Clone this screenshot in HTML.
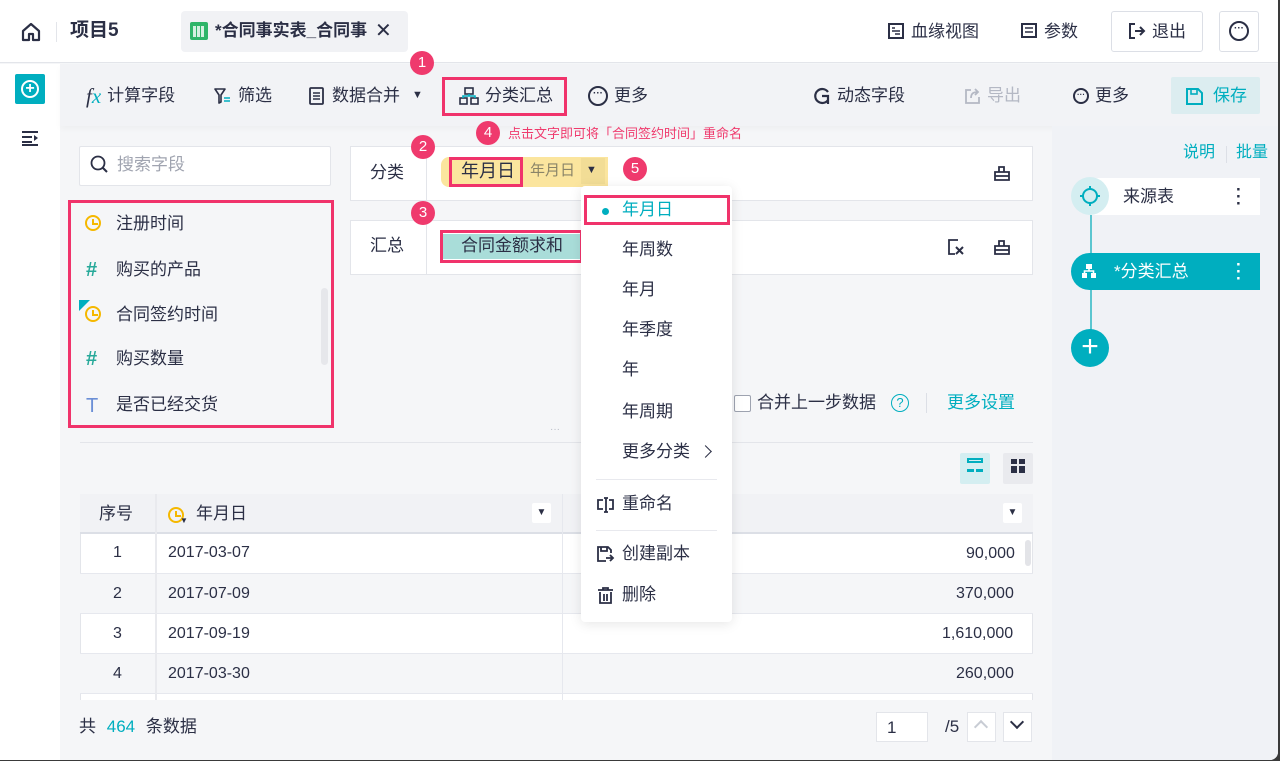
<!DOCTYPE html>
<html><head><meta charset="utf-8"><style>
*{box-sizing:border-box;margin:0;padding:0}
body{width:1280px;height:761px;overflow:hidden;background:#3a3a3a;font-family:"Liberation Sans","Noto Sans CJK SC",sans-serif;color:#2b2f45;font-size:16px;position:relative;line-height:1.25}
.a{position:absolute}
.win{position:absolute;left:0;top:0;width:1278px;height:760px;background:#f5f6f8;border-radius:0 0 8px 0;overflow:hidden}
.pink{border:3px solid #f0336b}
.badge{position:absolute;width:24px;height:24px;border-radius:12px;background:#ef3a6d;color:#fff;font-size:15px;text-align:center;line-height:24px}
.tb{position:absolute;top:84px;font-size:17px;display:flex;align-items:center;gap:6px;height:24px}
.fld{position:absolute;left:116px;font-size:17px}
.mi{position:absolute;left:622px;font-size:17px}
.clk{position:absolute;width:16px;height:16px;border:2px solid #f5b800;border-radius:50%}
.clk:after{content:"";position:absolute;left:5px;top:2px;width:4px;height:4px;border-left:2px solid #f5b800;border-bottom:2px solid #f5b800}
</style></head><body>
<div class="win">
<!-- top bar -->
<div class="a" style="left:0;top:0;width:1278px;height:63px;background:#fff;border-bottom:1px solid #e3e5ea"></div>
<svg class="a" style="left:20px;top:21px" width="22" height="22" viewBox="0 0 22 22"><path d="M3 10 L11 3 L19 10 V19 H13 V13 H9 V19 H3 Z" fill="none" stroke="#2b2f45" stroke-width="2.2" stroke-linejoin="round"/></svg>
<div class="a" style="left:56px;top:22px;width:1px;height:20px;background:#e3e5ea"></div>
<div class="a" style="left:70px;top:19px;font-size:19px;font-weight:bold">项目5</div>
<div class="a" style="left:181px;top:11px;width:227px;height:41px;background:#f1f2f5;border-radius:4px"></div>
<div class="a" style="left:190px;top:22px;width:18px;height:18px;background:#2fb569;border-radius:2px"><div style="margin:4px 3px;height:11px;background:repeating-linear-gradient(90deg,#fff 0 3px,transparent 3px 4px);opacity:.8"></div></div>
<div class="a" style="left:215px;top:20px;font-size:17px;font-weight:bold;width:152px;white-space:nowrap;overflow:hidden">*合同事实表_合同事</div>
<div class="a" style="left:375px;top:19px;font-size:20px">✕</div>
<svg class="a" style="left:888px;top:23px" width="16" height="16"><rect x="1" y="1" width="14" height="14" fill="none" stroke="#2b2f45" stroke-width="2"/><path d="M4 5h3M4 8h8M7 11h5" stroke="#2b2f45" stroke-width="1.6"/></svg>
<div class="a" style="left:911px;top:21px;font-size:17px">血缘视图</div>
<svg class="a" style="left:1021px;top:23px" width="16" height="16"><rect x="1" y="1" width="14" height="13" fill="none" stroke="#2b2f45" stroke-width="2"/><path d="M4 5h8M4 9h8" stroke="#2b2f45" stroke-width="1.6"/></svg>
<div class="a" style="left:1044px;top:21px;font-size:17px">参数</div>
<div class="a" style="left:1111px;top:11px;width:92px;height:41px;border:1px solid #dcdfe6;border-radius:3px;background:#fff"></div>
<svg class="a" style="left:1128px;top:22px" width="18" height="18"><path d="M7 2H2V16H7M7 9H16M12 5L16 9L12 13" fill="none" stroke="#2b2f45" stroke-width="2"/></svg>
<div class="a" style="left:1152px;top:21px;font-size:17px">退出</div>
<div class="a" style="left:1219px;top:11px;width:40px;height:41px;border:1px solid #dcdfe6;border-radius:3px;background:#fff"></div>
<div class="a" style="left:1229px;top:21px;width:20px;height:20px;border:2px solid #2b2f45;border-radius:50%;font-size:10px;text-align:center;line-height:12px;font-weight:bold">···</div>

<!-- left rail -->
<div class="a" style="left:0;top:64px;width:60px;height:700px;background:#fff"></div>
<div class="a" style="left:15px;top:74px;width:30px;height:30px;background:#00aebf;border-radius:2px"><div style="margin:6px;width:18px;height:18px;border:2px solid #fff;border-radius:50%;color:#fff;font-size:16px;line-height:13px;text-align:center;font-weight:bold">+</div></div>
<svg class="a" style="left:22px;top:130px" width="18" height="16"><path d="M0 2H16M0 7H10M0 12H10M0 15H16" stroke="#2b2f45" stroke-width="2"/><path d="M12 5L16 8L12 11Z" fill="#2b2f45"/></svg>

<!-- toolbar -->
<div class="a" style="left:60px;top:64px;width:1218px;height:62px;background:#f2f3f6;box-shadow:0 3px 6px rgba(0,0,0,.03)"></div>
<div class="tb" style="left:86px"><span style="font-style:italic;font-family:'Liberation Serif',serif;font-size:21px">f<span style="color:#00aebf">x</span></span><span>计算字段</span></div>
<div class="tb" style="left:214px"><svg width="18" height="18"><path d="M1 2H11L7 8V15L5 16V8Z" fill="none" stroke="#2b2f45" stroke-width="1.6" stroke-linejoin="round"/><path d="M10 11H16M10 14H16" stroke="#00aebf" stroke-width="1.6"/></svg><span>筛选</span></div>
<div class="tb" style="left:308px"><svg width="18" height="20"><rect x="2" y="2" width="13" height="16" rx="1" fill="none" stroke="#2b2f45" stroke-width="1.8"/><path d="M5 7h7M5 10h7M5 13h7" stroke="#2b2f45" stroke-width="1.4"/></svg><span>数据合并</span><span style="font-size:11px;margin-left:6px">▼</span></div>
<div class="a pink" style="left:442px;top:77px;width:125px;height:39px"></div>
<div class="tb" style="left:459px"><svg width="20" height="18"><rect x="6" y="1" width="8" height="6" fill="none" stroke="#2b2f45" stroke-width="1.6"/><rect x="1" y="11" width="7" height="6" fill="none" stroke="#2b2f45" stroke-width="1.6"/><rect x="12" y="11" width="7" height="6" fill="none" stroke="#2b2f45" stroke-width="1.6"/><path d="M10 7v2M4 11V9h12v2" stroke="#00aebf" stroke-width="1.6" fill="none"/></svg><span>分类汇总</span></div>
<div class="badge" style="left:410px;top:51px">1</div>
<div class="tb" style="left:588px"><span style="display:inline-block;width:20px;height:20px;border:2px solid #2b2f45;border-radius:50%;font-size:10px;text-align:center;line-height:12px;font-weight:bold">···</span><span>更多</span></div>
<div class="tb" style="left:813px"><svg width="18" height="18"><path d="M15 5A7 7 0 1 0 15 13M9 9H15V17" fill="none" stroke="#2b2f45" stroke-width="2.2"/></svg><span>动态字段</span></div>
<div class="tb" style="left:965px;color:#b4b8c4"><svg width="16" height="18"><path d="M6 3H1V16H14V10" fill="none" stroke="#b4b8c4" stroke-width="1.8"/><path d="M6 11C6 6 9 5 13 5M10 2L13 5L10 8" fill="none" stroke="#b4b8c4" stroke-width="1.8"/></svg><span>导出</span></div>
<div class="tb" style="left:1073px"><span style="display:inline-block;width:16px;height:16px;border:2px solid #2b2f45;border-radius:50%;font-size:8px;text-align:center;line-height:9px;font-weight:bold">···</span><span>更多</span></div>
<div class="a" style="left:1171px;top:77px;width:89px;height:37px;background:#dcedf0;border-radius:2px"></div>
<div class="tb" style="left:1186px;color:#00aebf"><svg width="17" height="17"><path d="M1 1H12L16 5V16H1Z" fill="none" stroke="#00aebf" stroke-width="2"/><rect x="5" y="1" width="6" height="5" fill="none" stroke="#00aebf" stroke-width="1.6"/></svg><span style="margin-left:4px">保存</span></div>

<!-- right panel -->
<div class="a" style="left:1052px;top:126px;width:226px;height:640px;background:#f0f2f6"></div>
<div class="a" style="left:1183px;top:143px;color:#00aebf;font-size:16px">说明</div>
<div class="a" style="left:1226px;top:146px;width:1px;height:17px;background:#dcdfe6"></div>
<div class="a" style="left:1236px;top:143px;color:#00aebf;font-size:16px">批量</div>
<div class="a" style="left:1090px;top:200px;width:2px;height:150px;background:#5cc6d0"></div>
<div class="a" style="left:1090px;top:178px;width:170px;height:37px;background:#fff"></div>
<div class="a" style="left:1071px;top:177px;width:38px;height:38px;border-radius:50%;background:#d4eef1"></div>
<div class="a" style="left:1082px;top:188px;width:16px;height:16px;border:2.5px solid #00aebf;border-radius:50%"></div>
<div class="a" style="left:1080px;top:195px;width:20px;height:2px;background:linear-gradient(90deg,#00aebf 0 4px,transparent 4px 16px,#00aebf 16px)"></div>
<div class="a" style="left:1089px;top:186px;width:2px;height:20px;background:linear-gradient(#00aebf 0 4px,transparent 4px 16px,#00aebf 16px)"></div>
<div class="a" style="left:1123px;top:186px;font-size:17px">来源表</div>
<div class="a" style="left:1236px;top:186px;font-size:17px;font-weight:bold;line-height:7px">·<br>·<br>·</div>
<div class="a" style="left:1071px;top:253px;width:189px;height:37px;background:#00aebf;border-radius:19px 0 0 19px"></div>
<svg class="a" style="left:1081px;top:263px" width="16" height="16"><rect x="5" y="1" width="6" height="5" fill="#fff"/><rect x="1" y="10" width="5" height="5" fill="#fff"/><rect x="10" y="10" width="5" height="5" fill="#fff"/><path d="M8 6v2M3.5 10V8h9v2" stroke="#fff" stroke-width="1.6" fill="none"/></svg>
<div class="a" style="left:1114px;top:261px;font-size:17px;color:#fff">*分类汇总</div>
<div class="a" style="left:1236px;top:261px;font-size:17px;font-weight:bold;line-height:7px;color:#fff">·<br>·<br>·</div>
<div class="a" style="left:1071px;top:329px;width:38px;height:38px;border-radius:50%;background:#00aebf;color:#fff;font-size:30px;text-align:center;line-height:36px">+</div>

<!-- field list -->
<div class="a" style="left:79px;top:146px;width:252px;height:40px;background:#fff;border:1px solid #e3e5ea;border-radius:2px"></div>
<svg class="a" style="left:90px;top:155px" width="20" height="20"><circle cx="8" cy="8" r="6.5" fill="none" stroke="#2b2f45" stroke-width="1.8"/><path d="M13 13L17 17" stroke="#2b2f45" stroke-width="2"/></svg>
<div class="a" style="left:117px;top:154px;font-size:17px;color:#a0a4b0">搜索字段</div>
<div class="a pink" style="left:68px;top:200px;width:266px;height:228px"></div>
<div class="a" style="left:321px;top:288px;width:7px;height:77px;background:#e6e7eb;border-radius:4px"></div>
<div class="clk" style="left:85px;top:215px"></div>
<div class="fld" style="top:213px">注册时间</div>
<div class="a" style="left:86px;top:258px;font-size:20px;color:#27a99a;font-weight:bold">#</div>
<div class="fld" style="top:259px">购买的产品</div>
<div class="clk" style="left:85px;top:306px"></div>
<div class="a" style="left:79px;top:300px;width:0;height:0;border-top:11px solid #00aebf;border-right:11px solid transparent"></div>
<div class="fld" style="top:304px">合同签约时间</div>
<div class="a" style="left:86px;top:347px;font-size:20px;color:#27a99a;font-weight:bold">#</div>
<div class="fld" style="top:348px">购买数量</div>
<div class="a" style="left:86px;top:394px;font-size:20px;color:#6b8fd6">T</div>
<div class="fld" style="top:394px">是否已经交货</div>

<!-- 分类 / 汇总 -->
<div class="a" style="left:350px;top:146px;width:683px;height:55px;background:#fff;border:1px solid #e3e5ea"></div>
<div class="a" style="left:426px;top:146px;width:1px;height:55px;background:#e3e5ea"></div>
<div class="a" style="left:370px;top:162px;font-size:17px">分类</div>
<div class="a" style="left:441px;top:157px;width:167px;height:30px;background:#fbe59e;border-radius:8px 0 0 8px"></div>
<div class="a pink" style="left:449px;top:157px;width:74px;height:30px"></div>
<div class="a" style="left:461px;top:160px;font-size:18px">年月日</div>
<div class="a" style="left:530px;top:162px;font-size:15px;color:#8a8468">年月日</div>
<div class="a" style="left:581px;top:158px;width:24px;height:26px;background:#f2dd96"></div>
<div class="a" style="left:586px;top:164px;font-size:11px">▼</div>
<div class="badge" style="left:411px;top:135px">2</div>
<div class="badge" style="left:623px;top:157px">5</div>
<div class="badge" style="left:476px;top:121px">4</div>
<div class="a" style="left:508px;top:126px;font-size:13px;color:#ef3a6d">点击文字即可将「合同签约时间」重命名</div>
<svg class="a" style="left:993px;top:164px" width="18" height="18"><path d="M2 8H16V16H2Z M6 8V3H11V8 M2 12H16" fill="none" stroke="#2b2f45" stroke-width="1.8"/></svg>

<div class="a" style="left:350px;top:220px;width:683px;height:55px;background:#fff;border:1px solid #e3e5ea"></div>
<div class="a" style="left:426px;top:220px;width:1px;height:55px;background:#e3e5ea"></div>
<div class="a" style="left:370px;top:235px;font-size:17px">汇总</div>
<div class="badge" style="left:411px;top:201px">3</div>
<div class="a" style="left:443px;top:234px;width:140px;height:25px;background:#a9ddd9"></div>
<div class="a pink" style="left:440px;top:230px;width:143px;height:33px"></div>
<div class="a" style="left:461px;top:235px;font-size:17px">合同金额求和</div>
<svg class="a" style="left:947px;top:238px" width="18" height="18"><path d="M11 2H2V16H8" fill="none" stroke="#2b2f45" stroke-width="1.8"/><path d="M9 9L16 16M16 9L9 16" stroke="#2b2f45" stroke-width="2"/></svg>
<svg class="a" style="left:993px;top:238px" width="18" height="18"><path d="M2 8H16V16H2Z M6 8V3H11V8 M2 12H16" fill="none" stroke="#2b2f45" stroke-width="1.8"/></svg>

<!-- merge options -->
<div class="a" style="left:734px;top:395px;width:17px;height:17px;border:1px solid #9ea3b0;border-radius:2px;background:#fff"></div>
<div class="a" style="left:757px;top:392px;font-size:17px">合并上一步数据</div>
<div class="a" style="left:891px;top:394px;width:18px;height:18px;border:1.5px solid #00aebf;border-radius:50%;color:#00aebf;font-size:13px;text-align:center;line-height:16px">?</div>
<div class="a" style="left:926px;top:393px;width:1px;height:20px;background:#dcdfe6"></div>
<div class="a" style="left:947px;top:392px;font-size:17px;color:#00aebf">更多设置</div>
<div class="a" style="left:80px;top:442px;width:953px;height:1px;background:#e3e5ea"></div>
<div class="a" style="left:550px;top:424px;font-size:10px;color:#b8bcc6">···</div>
<div class="a" style="left:960px;top:453px;width:30px;height:31px;background:#d4eef1;border-radius:2px"></div>
<div class="a" style="left:967px;top:458px;width:16px;height:5px;border:2px solid #00aebf"></div>
<div class="a" style="left:967px;top:469px;width:16px;height:3px;background:linear-gradient(90deg,#00aebf 0 7px,transparent 7px 9px,#00aebf 9px)"></div>
<div class="a" style="left:1003px;top:453px;width:30px;height:31px;background:#e9eaee;border-radius:2px"></div>
<div class="a" style="left:1011px;top:459px;width:14px;height:14px;background:linear-gradient(#2b2f45,#2b2f45) 0 0/6px 5px no-repeat,linear-gradient(#2b2f45,#2b2f45) 8px 0/6px 5px no-repeat,linear-gradient(#2b2f45,#2b2f45) 0 7px/6px 7px no-repeat,linear-gradient(#2b2f45,#2b2f45) 8px 7px/6px 7px no-repeat"></div>

<!-- table -->
<div class="a" style="left:80px;top:494px;width:953px;height:206px;background:#fff;border:1px solid #e3e5ea;border-bottom:none"></div>
<div class="a" style="left:80px;top:494px;width:953px;height:40px;background:#f1f2f5;border-bottom:2px solid #dcdfe6"></div>
<div class="a" style="left:80px;top:573px;width:953px;height:40px;background:#f5f6f8"></div>
<div class="a" style="left:80px;top:653px;width:953px;height:40px;background:#f5f6f8"></div>
<div class="a" style="left:80px;top:573px;width:953px;height:1px;background:#e6e8ee"></div>
<div class="a" style="left:80px;top:613px;width:953px;height:1px;background:#e6e8ee"></div>
<div class="a" style="left:80px;top:653px;width:953px;height:1px;background:#e6e8ee"></div>
<div class="a" style="left:80px;top:693px;width:953px;height:1px;background:#e6e8ee"></div>
<div class="a" style="left:155px;top:494px;width:2px;height:206px;background:#e9eaee"></div>
<div class="a" style="left:562px;top:494px;width:1px;height:206px;background:#e6e8ee"></div>
<div class="a" style="left:99px;top:503px;font-size:17px">序号</div>
<div class="clk" style="left:168px;top:507px"></div>
<div class="a" style="left:180px;top:516px;font-size:8px">▼</div>
<div class="a" style="left:196px;top:503px;font-size:17px">年月日</div>
<div class="a" style="left:532px;top:503px;width:19px;height:20px;background:#fff;border-radius:2px;font-size:10px;text-align:center;line-height:20px">▼</div>
<div class="a" style="left:1003px;top:503px;width:19px;height:20px;background:#fff;border-radius:2px;font-size:10px;text-align:center;line-height:20px">▼</div>
<div class="a" style="left:1025px;top:540px;width:6px;height:26px;background:#e3e4e8;border-radius:3px"></div>
<div class="a" style="left:113px;top:543px">1</div><div class="a" style="left:168px;top:543px">2017-03-07</div><div class="a" style="left:966px;top:544px">90,000</div>
<div class="a" style="left:113px;top:584px">2</div><div class="a" style="left:168px;top:584px">2017-07-09</div><div class="a" style="left:956px;top:584px">370,000</div>
<div class="a" style="left:113px;top:624px">3</div><div class="a" style="left:168px;top:624px">2017-09-19</div><div class="a" style="left:942px;top:624px">1,610,000</div>
<div class="a" style="left:113px;top:664px">4</div><div class="a" style="left:168px;top:664px">2017-03-30</div><div class="a" style="left:956px;top:664px">260,000</div>

<!-- footer -->
<div class="a" style="left:79px;top:716px;font-size:17px">共 <span style="color:#00aebf;margin:0 6px">464</span> 条数据</div>
<div class="a" style="left:876px;top:712px;width:52px;height:30px;border:1px solid #e3e5ea;background:#fff;font-size:17px;padding:4px 10px">1</div>
<div class="a" style="left:945px;top:716px;font-size:17px">/5</div>
<div class="a" style="left:967px;top:712px;width:29px;height:30px;border:1px solid #e3e5ea;background:#fff"></div>
<div class="a" style="left:976px;top:722px;width:10px;height:10px;border-left:2px solid #c8ccd4;border-top:2px solid #c8ccd4;transform:rotate(45deg)"></div>
<div class="a" style="left:1003px;top:712px;width:29px;height:30px;border:1px solid #e3e5ea;background:#fff"></div>
<div class="a" style="left:1012px;top:717px;width:10px;height:10px;border-right:2px solid #2b2f45;border-bottom:2px solid #2b2f45;transform:rotate(45deg)"></div>

<!-- dropdown menu -->
<div class="a" style="left:581px;top:186px;width:151px;height:436px;background:#fff;border-radius:4px;box-shadow:0 2px 12px rgba(0,0,0,.1)"></div>
<div class="a pink" style="left:584px;top:195px;width:146px;height:30px"></div>
<div class="a" style="left:602px;top:208px;width:7px;height:7px;border-radius:50%;background:#00aebf"></div>
<div class="mi" style="top:199px;color:#00aebf">年月日</div>
<div class="mi" style="top:239px">年周数</div>
<div class="mi" style="top:279px">年月</div>
<div class="mi" style="top:319px">年季度</div>
<div class="mi" style="top:359px">年</div>
<div class="mi" style="top:401px">年周期</div>
<div class="mi" style="top:441px">更多分类</div>
<div class="a" style="left:701px;top:447px;width:9px;height:9px;border-right:1.8px solid #2b2f45;border-top:1.8px solid #2b2f45;transform:rotate(45deg)"></div>
<div class="a" style="left:596px;top:479px;width:121px;height:1px;background:#e8e9ee"></div>
<svg class="a" style="left:597px;top:496px" width="18" height="18"><path d="M6 4H1V13H6M12 4H16V13H12M9 2V16M7 2H11M7 16H11" fill="none" stroke="#2b2f45" stroke-width="1.8"/></svg>
<div class="mi" style="top:493px">重命名</div>
<div class="a" style="left:596px;top:530px;width:121px;height:1px;background:#e8e9ee"></div>
<svg class="a" style="left:597px;top:546px" width="18" height="18"><path d="M9 15H1V1H11L14 4V7M4 1V5H10V1" fill="none" stroke="#2b2f45" stroke-width="1.8"/><path d="M9 12H16M13 9L16 12L13 15" fill="none" stroke="#2b2f45" stroke-width="1.8"/></svg>
<div class="mi" style="top:543px">创建副本</div>
<svg class="a" style="left:597px;top:587px" width="18" height="18"><path d="M1 3H16M6 3V1H11V3M3 5V16H14V5M7 7V14M10 7V14" fill="none" stroke="#2b2f45" stroke-width="1.8"/></svg>
<div class="mi" style="top:584px">删除</div>
</div>
</body></html>
